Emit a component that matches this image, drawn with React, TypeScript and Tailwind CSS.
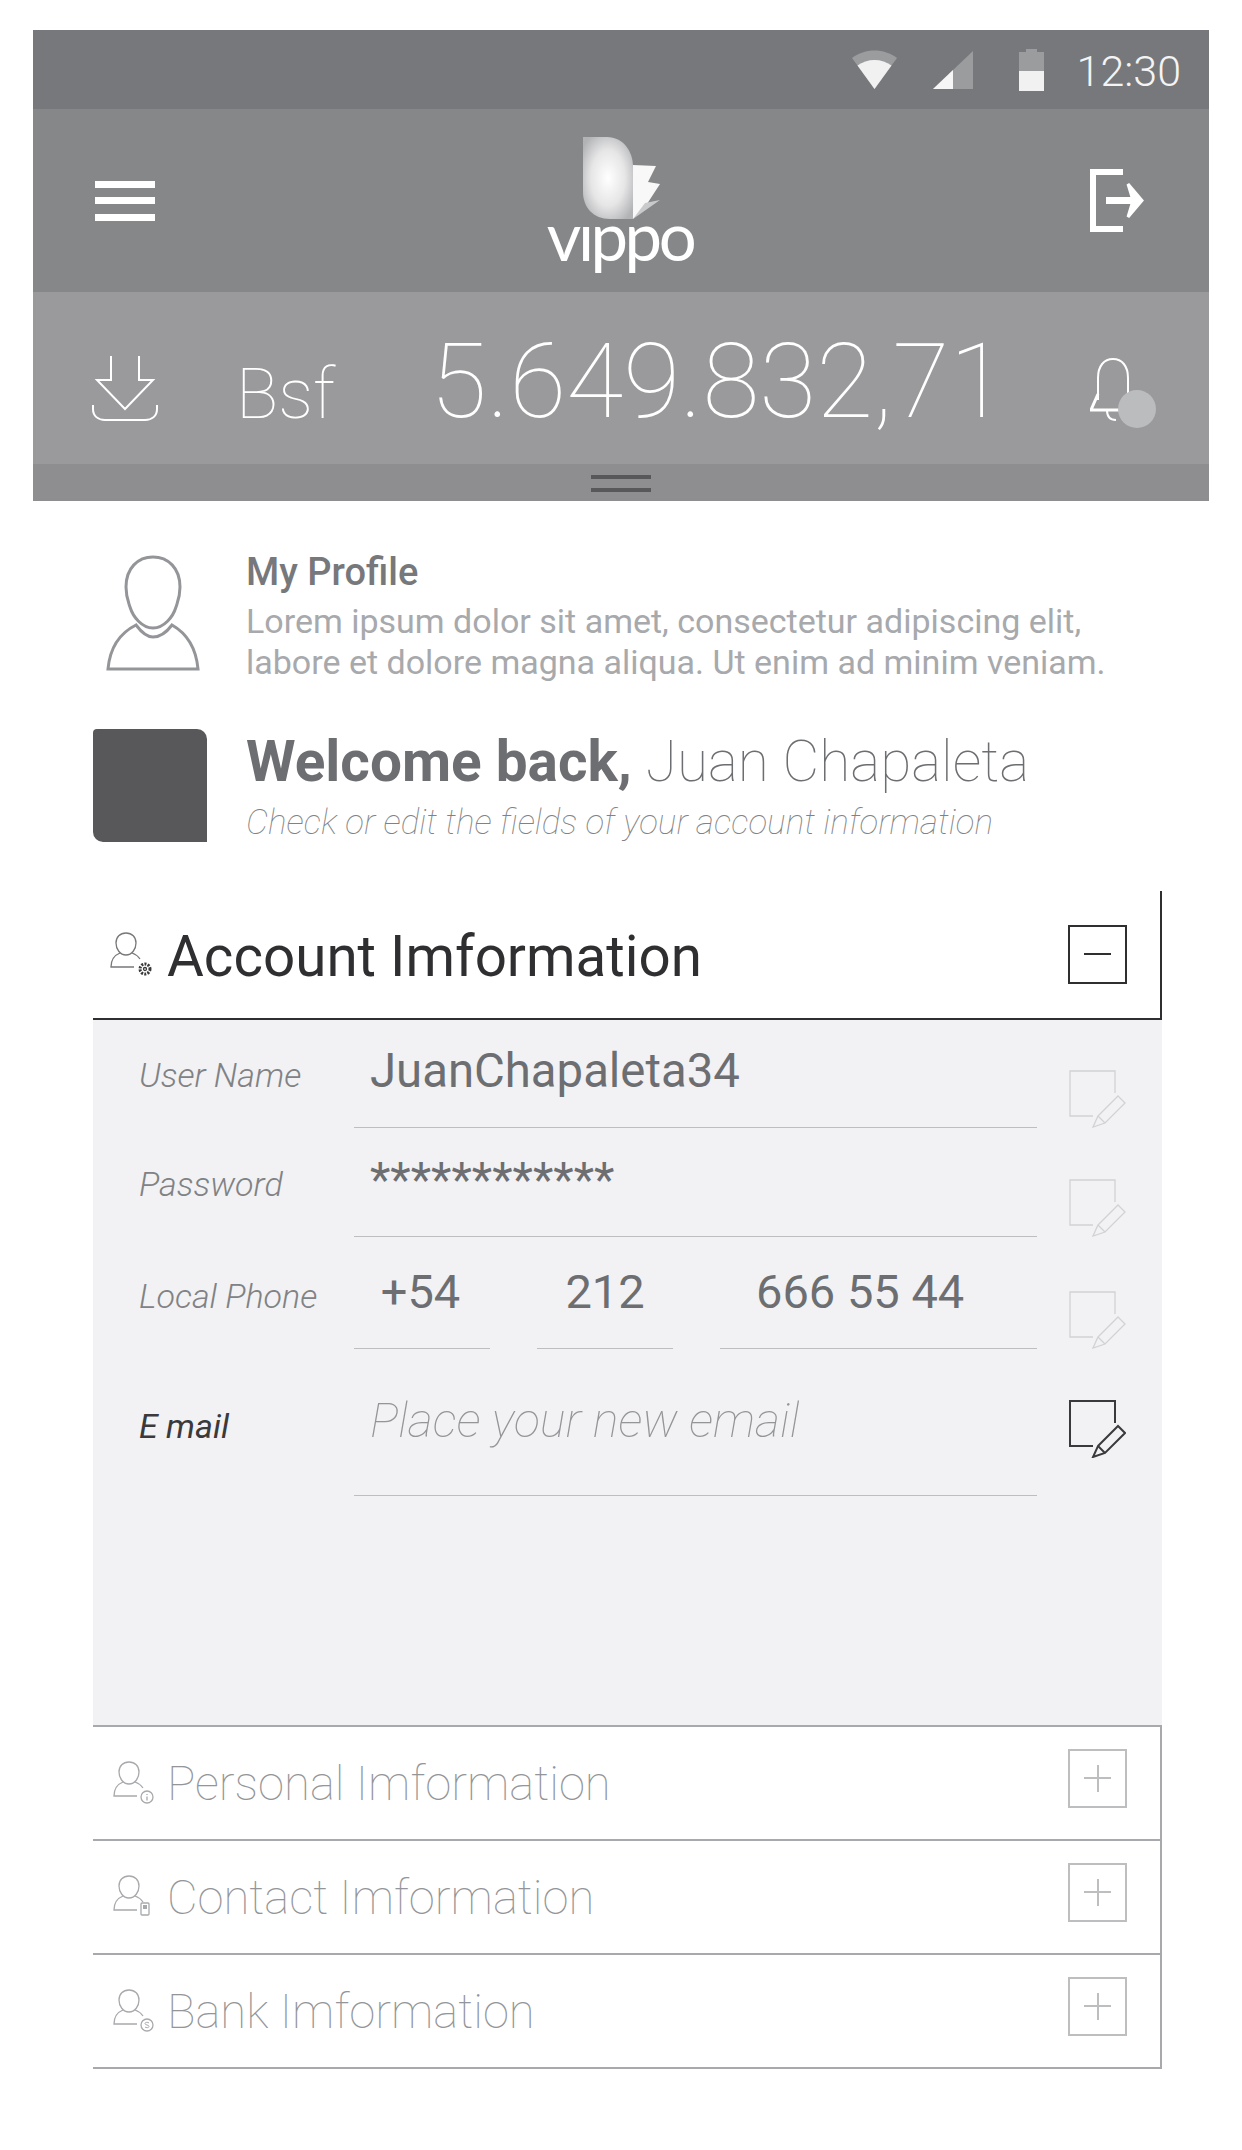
import React from "react";

function Wifi() {
  return (
    <svg width="45" height="39" viewBox="0 0 45 39" className="block">
      <path d="M0 8C13-2 32-2 45 8L22.5 39Z" fill="#9b9c9e" />
      <path d="M5.5 15.5C15 8 30 8 39.5 15.5L22.5 39Z" fill="#f1f1f2" />
    </svg>
  );
}
function Signal() {
  return (
    <svg width="40" height="38" viewBox="0 0 40 38" className="block">
      <path d="M40 0V38H0Z" fill="#9b9c9e" />
      <path d="M20 19V38H0Z" fill="#f6f6f7" />
    </svg>
  );
}
function Battery() {
  return (
    <svg width="25" height="42" viewBox="0 0 25 42" className="block">
      <path d="M7 0H18V3H25V42H0V3H7Z" fill="#9b9c9e" />
      <rect y="22" width="25" height="20" fill="#f1f1f2" />
    </svg>
  );
}
function Logo() {
  return (
    <svg width="78" height="83" viewBox="0 0 78 83" className="block">
      <defs>
        <radialGradient id="lg" cx="0.5" cy="0.5" r="0.62">
          <stop offset="0" stopColor="#ffffff" />
          <stop offset="0.55" stopColor="#e6e6e7" />
          <stop offset="1" stopColor="#b2b3b5" />
        </radialGradient>
      </defs>
      <path d="M0 0H24C40 0 50 14 50 30V82H27C10 82 0 70 0 55Z" fill="url(#lg)" />
      <path d="M50 28L73 29L65 45L77 47L62 70L50 82Z" fill="#f8f8f8" />
      <path d="M50 82L62 66L77 63Z" fill="#c9cacb" />
    </svg>
  );
}
function Logout() {
  return (
    <svg width="58" height="63" viewBox="0 0 58 63" fill="none" className="block">
      <path d="M33 3H3V60H33" stroke="#fff" strokeWidth="6" />
      <path d="M16 28H46V35H16Z" fill="#fff" />
      <path d="M38 15L52 31.5L38 48L43 31.5Z" fill="#fff" stroke="#fff" strokeWidth="3" />
    </svg>
  );
}
function Download() {
  return (
    <svg width="66" height="65" viewBox="0 0 66 65" fill="none" stroke="#fff" strokeWidth="2" className="block">
      <path d="M19 0V24H5L33 53L61 24H47V0" />
      <path d="M1 49V53C1 60 6 64 13 64H53C60 64 65 60 65 53V49" />
    </svg>
  );
}
function Bell() {
  return (
    <svg width="66" height="72" viewBox="0 0 66 72" fill="none" className="block">
      <path d="M8 42V20C8 8 14 1 23 1C32 1 38 8 38 20V42" stroke="#fff" strokeWidth="2" />
      <path d="M8 36L1 52H30" stroke="#fff" strokeWidth="3" />
      <path d="M17 52C17 58 20 62 26 62" stroke="#fff" strokeWidth="2" />
      <circle cx="47" cy="51" r="19" fill="#bbbcbe" />
    </svg>
  );
}
function Person() {
  return (
    <svg width="94" height="116" viewBox="0 0 94 116" fill="none" stroke="#939598" strokeWidth="3" className="block">
      <path d="M47 2C32 2 20 13 20 32C20 42 22 46 24 52C27 62 36 73 47 73C58 73 67 62 70 52C72 46 74 42 74 32C74 13 62 2 47 2Z" />
      <path d="M30 70C36 78 42 82 47 82C53 82 60 78 66 70C80 78 90 92 92 114H2C4 92 14 78 30 70Z" />
    </svg>
  );
}
function SmallPerson({ badge, stroke }: { badge: "gear" | "info" | "phone" | "money"; stroke: string }) {
  return (
    <svg width="44" height="48" viewBox="0 0 44 48" fill="none" stroke={stroke} strokeWidth="1.3" className="mt-[3px] block">
      <path d="M16 1C10 1 6 5 6 11C6 17 10 23 16 23C22 23 26 17 26 11C26 5 22 1 16 1Z" />
      <path d="M10 21C5 23 1 28 1 35H24M22 21C25 22 28 24 30 27" />
      {badge === "gear" && (
        <g>
          <circle cx="35" cy="37" r="5" stroke="#3a3a3c" strokeWidth="3" strokeDasharray="2 1.2" />
          <circle cx="35" cy="37" r="1.5" stroke="#3a3a3c" />
        </g>
      )}
      {badge === "info" && (
        <g>
          <circle cx="34" cy="36" r="6" />
          <path d="M34 33V34M34 35.5V39.5" />
        </g>
      )}
      {badge === "phone" && (
        <g>
          <rect x="28" y="28" width="8" height="12" rx="1" />
          <rect x="30" y="30" width="4" height="4" fill={stroke} stroke="none" />
        </g>
      )}
      {badge === "money" && (
        <g>
          <circle cx="34" cy="36" r="6" />
          <path d="M36 34C35 33 32 33 32 34.6C32 36.4 36 35.6 36 37.4C36 39 33 39 32 38" strokeWidth="1" />
        </g>
      )}
    </svg>
  );
}
function EditIcon({ active }: { active?: boolean }) {
  const stroke = active ? "#3a3a3c" : "#d1d2d4";
  return (
    <svg width="57" height="58" viewBox="0 0 57 58" fill="none" stroke={stroke} strokeWidth={active ? 2 : 1.3} className="block">
      <path d="M24 46H1V1H46V23" />
      <path d="M29 46L49 26L56 33L36 53L24 57Z" />
      <path d="M29 46L36 53" />
    </svg>
  );
}
function ToggleBox({ open }: { open?: boolean }) {
  const c = open ? "border-[#2f2f31]" : "border-[#bcbec0]";
  const bar = open ? "bg-[#2f2f31]" : "bg-[#bcbec0]";
  return (
    <div className={"relative h-[59px] w-[59px] border-2 " + c}>
      <div className={"absolute left-[14px] top-[26px] h-[2px] w-[27px] " + bar} />
      {!open && <div className={"absolute left-[26.5px] top-[14px] h-[27px] w-[2px] " + bar} />}
    </div>
  );
}
function FieldRow({ label, active, height, labelTop, iconBottom, children }: { label: string; active?: boolean; height: string; labelTop: string; iconBottom?: string; children: React.ReactNode }) {
  return (
    <div className={"flex " + height}>
      <div className={"w-[261px] shrink-0 pl-[46px] text-[34px] italic leading-[40px] " + labelTop + " " + (active ? "font-normal text-[#3a3a3c]" : "font-light text-[#808285]")}>
        {label}
      </div>
      <div className="flex w-[683px] shrink-0 gap-[47px]">{children}</div>
      <div className={"ml-[32px] flex items-end " + (iconBottom ?? "")}>
        <EditIcon active={active} />
      </div>
    </div>
  );
}
function Collapsed({ title, badge }: { title: string; badge: "info" | "phone" | "money" }) {
  return (
    <div className="flex h-[114px] items-center border-r-2 border-b-2 border-[#a7a9ac]">
      <div className="ml-[20px] w-[54px]">
        <SmallPerson badge={badge} stroke="#a7a9ac" />
      </div>
      <div className="flex-1 pt-[4px] text-[47.2px] leading-none font-thin text-[#939598]">{title}</div>
      <div className="mr-[33px] mb-[10px]">
        <ToggleBox />
      </div>
    </div>
  );
}

export default function App() {
  return (
    <div className="h-[2150px] w-[1242px] bg-white pt-[30px] font-['Roboto',sans-serif]">
      <header className="mx-[33px] w-[1176px]">
        <div className="flex h-[79px] items-center justify-end bg-[#77787b] pr-[28px]">
          <Wifi />
          <div className="ml-[36px]"><Signal /></div>
          <div className="ml-[46px]"><Battery /></div>
          <span className="mt-[4px] ml-[33px] text-[43px] leading-none font-light text-[#f4f4f5]">12:30</span>
        </div>
        <div className="flex h-[183px] items-center justify-between bg-[#868789] pr-[61px] pl-[62px]">
          <div className="flex h-[40px] w-[60px] flex-col justify-between">
            <div className="h-[7px] bg-white" />
            <div className="h-[7px] bg-white" />
            <div className="h-[7px] bg-white" />
          </div>
          <div className="flex flex-col items-center pt-[5px] pr-[11px]">
            <div className="pl-[10px]"><Logo /></div>
            <div className="-mt-[20px] ml-[6px] font-['Lato',sans-serif] text-[67px] leading-[70px] font-normal tracking-[-3.5px] text-white">vıppo</div>
          </div>
          <Logout />
        </div>
        <div className="flex h-[172px] bg-[#9a9a9c] pl-[59px] text-white">
          <div className="pt-[64px]"><Download /></div>
          <div className="ml-[78px] pt-[61px] text-[70px] leading-[82px] font-thin">Bsf</div>
          <div className="ml-[95px] pt-[29px] text-[104px] leading-[122px] font-thin">5.649.832,71</div>
          <div className="ml-[84px] pt-[66px]"><Bell /></div>
        </div>
        <div className="flex h-[37px] flex-col items-center gap-[9px] bg-[#8e8e90] pt-[11px]">
          <div className="h-[4px] w-[60px] bg-[#58585a]" />
          <div className="h-[4px] w-[60px] bg-[#58585a]" />
        </div>
      </header>

      <section className="flex pt-[54px] pl-[106px]">
        <div className="w-[140px] shrink-0"><Person /></div>
        <div className="-mt-[8px]">
          <h2 className="text-[38px] leading-[51px] font-medium text-[#77787b]">My Profile</h2>
          <p className="mt-[3px] text-[34px] leading-[41px] text-[#a7a9ac]">
            Lorem ipsum dolor sit amet, consectetur adipiscing elit,
            <br />
            labore et dolore magna aliqua. Ut enim ad minim veniam.
          </p>
        </div>
      </section>

      <section className="mt-[46px] flex pl-[93px]">
        <div className="h-[113px] w-[114px] shrink-0 rounded-tr-[10px] rounded-bl-[10px] rounded-tl-[4px] bg-[#58585a]" />
        <div className="ml-[39px]">
          <h1 className="text-[56.7px] leading-[66px] text-[#6d6e71]">
            <span className="font-bold">Welcome back, </span>
            <span className="font-thin">Juan Chapaleta</span>
          </h1>
          <p className="mt-[6px] text-[35px] leading-[44px] font-thin text-[#808285] italic">Check or edit the fields of your account information</p>
        </div>
      </section>

      <section className="mt-[46px] ml-[93px] w-[1069px]">
        <div className="flex h-[129px] items-center border-r-2 border-b-2 border-[#2f2f31]">
          <div className="ml-[17px] w-[57px]">
            <SmallPerson badge="gear" stroke="#77787b" />
          </div>
          <div className="flex-1 pt-[5px] text-[56.5px] leading-none text-[#2f2f31]">Account Imformation</div>
          <div className="mr-[33px]">
            <ToggleBox open />
          </div>
        </div>
        <div className="h-[705px] bg-[#f2f2f4]">
          <FieldRow label="User Name" height="h-[108px]" labelTop="pt-[35px]">
            <div className="flex-1 border-b border-[#bcbec0] pt-[25px] pl-[16px] text-[47.3px] leading-[52px] text-[#6d6e71]">JuanChapaleta34</div>
          </FieldRow>
          <FieldRow label="Password" height="h-[109px]" labelTop="pt-[36px]">
            <div className="flex-1 border-b border-[#bcbec0] pt-[26px] pl-[16px] text-[47.3px] leading-[52px] text-[#6d6e71]">************</div>
          </FieldRow>
          <FieldRow label="Local Phone" height="h-[112px]" labelTop="pt-[39px]">
            <div className="w-[136px] border-b border-[#bcbec0] pt-[28px] pr-[3px] text-center text-[47px] leading-[54px] text-[#6d6e71]">+54</div>
            <div className="w-[136px] border-b border-[#bcbec0] pt-[28px] text-center text-[47px] leading-[54px] text-[#6d6e71]">212</div>
            <div className="flex-1 border-b border-[#bcbec0] pt-[28px] pl-[36px] text-[47px] leading-[54px] text-[#6d6e71]">666 55 44</div>
          </FieldRow>
          <FieldRow label="E mail" active height="h-[147px]" labelTop="pt-[57px]" iconBottom="mb-[38px]">
            <div className="flex-1 border-b border-[#bcbec0] pt-[45px] pl-[16px] text-[48.5px] leading-[54px] font-thin text-[#939598] italic">Place your new email</div>
          </FieldRow>
        </div>
        <div className="border-t-2 border-[#a7a9ac]">
          <Collapsed title="Personal Imformation" badge="info" />
          <Collapsed title="Contact Imformation" badge="phone" />
          <Collapsed title="Bank Imformation" badge="money" />
        </div>
      </section>
    </div>
  );
}
